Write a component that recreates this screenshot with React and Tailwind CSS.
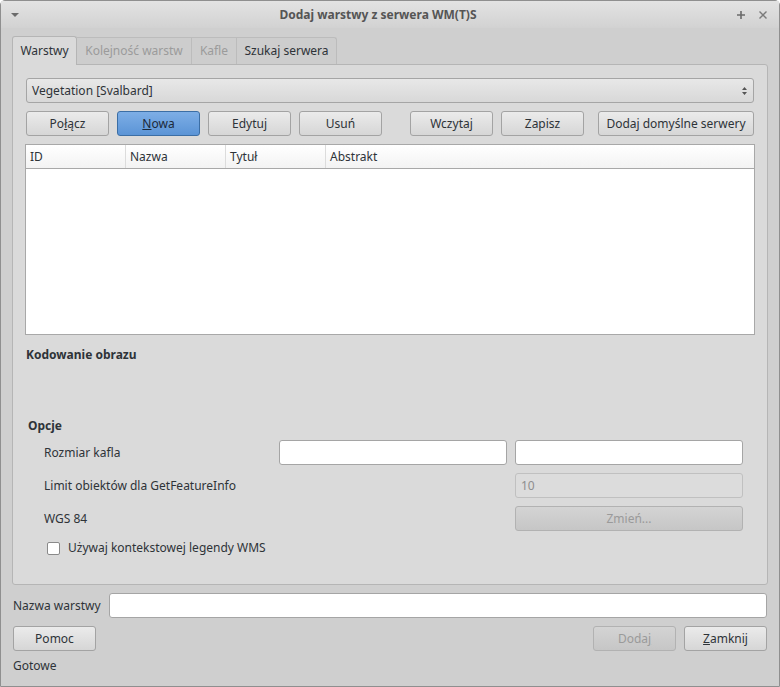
const font = { fontFamily: '"Noto Sans", "Open Sans", sans-serif' };

function Btn({ children, className = "", primary, disabled }) {
  const base = primary
    ? "border-[#3b6ea5] bg-gradient-to-b from-[#7daee6] to-[#5b94d6] text-[#1c2a3a]"
    : disabled
    ? "border-[#b2b2b2] bg-gradient-to-b from-[#d4d4d4] to-[#c6c6c6] text-[#9a9a9a]"
    : "border-[#a3a3a3] bg-gradient-to-b from-[#ebebeb] to-[#d6d6d6] text-[#2e3338]";
  return (
    <div className={`flex h-[25px] items-center justify-center rounded-[3px] border text-[12px] ${base} ${className}`}>
      {children}
    </div>
  );
}

function Field({ className = "", value, disabled }) {
  return (
    <div
      className={`flex h-[25px] items-center rounded-[3px] border px-[5px] text-[12px] ${
        disabled ? "border-[#c0c0c0] bg-[#dcdcdc] text-[#8e8e8e]" : "border-[#a5a5a5] bg-white"
      } ${className}`}
    >
      {value}
    </div>
  );
}

export default function App() {
  return (
    <div style={font} className="h-[687px] w-[780px] overflow-hidden bg-white text-[#2e3338]">
      <div className="flex h-full flex-col rounded-t-[5px] border border-[#8f8f8f] bg-[#cfcfcf]">
        {/* title bar */}
        <div className="flex h-[27px] items-center bg-gradient-to-b from-[#e3e3e3] to-[#d2d2d2] px-[9px]">
          <svg width="10" height="6" viewBox="0 0 10 6" className="mt-[1px]">
            <path d="M1 1h8L5 5z" fill="#6b6b6b" />
          </svg>
          <div className="flex-1 text-center text-[12px] font-bold text-[#555]">Dodaj warstwy z serwera WM(T)S</div>
          <svg width="10" height="10" viewBox="0 0 10 10" className="mr-[12px]">
            <path d="M5 1v8M1 5h8" stroke="#6b6b6b" strokeWidth="1.6" />
          </svg>
          <svg width="10" height="10" viewBox="0 0 10 10" className="mr-[2px]">
            <path d="M1.5 1.5l7 7M8.5 1.5l-7 7" stroke="#7a7a7a" strokeWidth="1.4" />
          </svg>
        </div>

        <div className="flex flex-1 flex-col px-[11px] pt-[8px]">
          {/* tabs */}
          <div className="flex h-[28px] items-end text-[12px]">
            <div className="z-10 -mb-px flex h-[29px] w-[65px] items-center justify-center rounded-t-[3px] border border-b-0 border-[#b5b5b5] bg-[#dadada]">
              Warstwy
            </div>
            <div className="flex h-[27px] w-[115px] items-center justify-center border-t border-r border-[#bcbcbc] bg-[#cdcdcd] text-[#9b9b9b]">
              Kolejność warstw
            </div>
            <div className="flex h-[27px] w-[45px] items-center justify-center border-t border-r border-[#bcbcbc] bg-[#cdcdcd] text-[#9b9b9b]">
              Kafle
            </div>
            <div className="flex h-[27px] w-[100px] items-center justify-center rounded-tr-[3px] border-t border-r border-[#bcbcbc] bg-[#cdcdcd]">
              Szukaj serwera
            </div>
          </div>

          {/* pane */}
          <div className="flex h-[521px] flex-col rounded-b-[3px] rounded-tr-[3px] border border-[#b5b5b5] bg-[#dadada] px-[13px] pt-[13px]">
            <div className="flex h-[25px] items-center justify-between rounded-[3px] border border-[#a5a5a5] bg-gradient-to-b from-[#e8e8e8] to-[#d8d8d8] pl-[5px] pr-[5px] text-[12px]">
              <span>Vegetation [Svalbard]</span>
              <svg width="7" height="12" viewBox="0 0 7 12">
                <path d="M3.5 2L6 5H1z M3.5 10L6 7H1z" fill="#555" />
              </svg>
            </div>

            <div className="mt-[8px] flex">
              <Btn className="w-[83px]">
                Po<span className="underline">ł</span>ącz
              </Btn>
              <Btn primary className="ml-[8px] w-[83px]">
                <span className="underline">N</span>owa
              </Btn>
              <Btn className="ml-[8px] w-[83px]">Edytuj</Btn>
              <Btn className="ml-[8px] w-[83px]">Usuń</Btn>
              <Btn className="ml-[28px] w-[83px]">Wczytaj</Btn>
              <Btn className="ml-[8px] w-[83px]">Zapisz</Btn>
              <Btn className="ml-[14px] w-[156px]">Dodaj domyślne serwery</Btn>
            </div>

            <div className="mt-[8px] ml-[-1px] h-[191px] w-[730px] border border-[#a8a8a8] bg-white">
              <div className="flex h-[24px] border-b border-[#a8a8a8] bg-gradient-to-b from-[#ffffff] to-[#f3f3f3] text-[12px]">
                <div className="flex w-[100px] items-center border-r border-[#dcdcdc] pl-[4px]">ID</div>
                <div className="flex w-[100px] items-center border-r border-[#dcdcdc] pl-[4px]">Nazwa</div>
                <div className="flex w-[100px] items-center border-r border-[#dcdcdc] pl-[4px]">Tytuł</div>
                <div className="flex flex-1 items-center pl-[4px]">Abstrakt</div>
              </div>
            </div>

            <div className="mt-[11px] text-[12px] font-bold">Kodowanie obrazu</div>

            <div className="mt-[53px] ml-[2px] text-[12px] font-bold">Opcje</div>

            <div className="mt-[5px] flex items-center text-[12px]">
              <span className="ml-[18px] w-[235px]">Rozmiar kafla</span>
              <Field className="w-[228px]" />
              <Field className="ml-[8px] w-[228px]" />
            </div>
            <div className="mt-[8px] flex items-center text-[12px]">
              <span className="ml-[18px] w-[471px]">Limit obiektów dla GetFeatureInfo</span>
              <Field disabled className="w-[228px]" value="10" />
            </div>
            <div className="mt-[8px] flex items-center text-[12px]">
              <span className="ml-[18px] w-[471px]">WGS 84</span>
              <Btn disabled className="w-[228px]">
                Zmień...
              </Btn>
            </div>
            <div className="mt-[8px] flex items-center text-[12px]">
              <div className="ml-[21px] h-[13px] w-[13px] rounded-[2px] border border-[#8a8a8a] bg-white" />
              <span className="ml-[8px]">Używaj kontekstowej legendy WMS</span>
            </div>
          </div>

          <div className="mt-[8px] flex items-center text-[12px]">
            <span className="w-[97px] pl-[1px]">Nazwa warstwy</span>
            <Field className="mr-[1px] flex-1" />
          </div>

          <div className="mt-[8px] flex items-center">
            <Btn className="ml-[1px] w-[83px]">Pomoc</Btn>
            <div className="flex-1" />
            <Btn disabled className="w-[83px]">
              Doda<span className="underline">j</span>
            </Btn>
            <Btn className="mr-[1px] ml-[8px] w-[83px]">
              <span className="underline">Z</span>amknij
            </Btn>
          </div>

          <div className="mt-[6px] pl-[1px] text-[12px]">Gotowe</div>
        </div>
      </div>
    </div>
  );
}
